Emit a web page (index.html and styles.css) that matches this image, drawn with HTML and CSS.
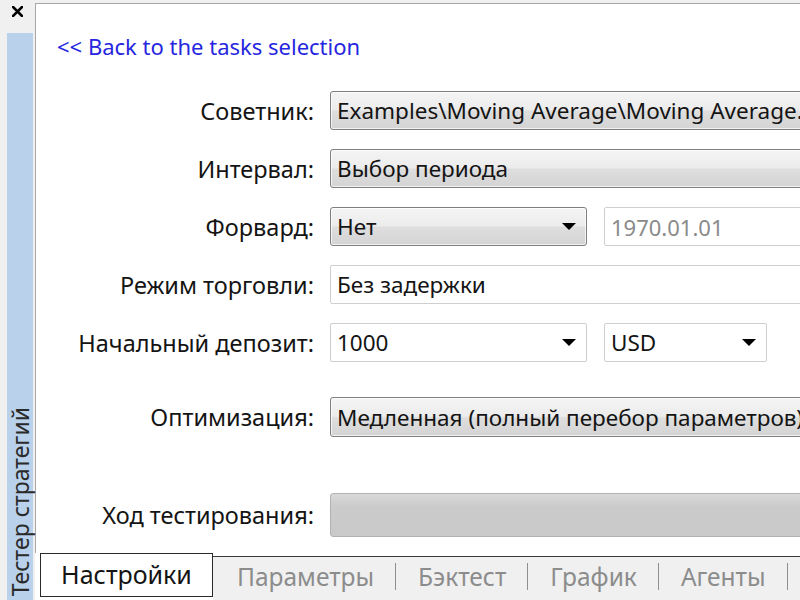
FILE: index.html
```html
<!DOCTYPE html>
<html lang="ru">
<head>
<meta charset="utf-8">
<title>Тестер стратегий</title>
<link rel="stylesheet" href="styles.css">
</head>
<body>
<div class="app">
  <aside class="side">
    <div class="close">
      <svg width="11" height="11" viewBox="0 0 11 11"><path d="M1 1 L10 10 M10 1 L1 10" stroke="#000" stroke-width="2.6" stroke-linecap="square"/></svg>
    </div>
    <div class="vtab"><span class="vtext">Тестер стратегий</span></div>
  </aside>
  <main class="panel">
    <div class="content">
      <div class="back-wrap"><a class="back" href="#">&lt;&lt; Back to the tasks selection</a></div>
      <div class="form">
        <div class="row">
          <div class="label">Советник:</div>
          <div class="ctrl btn wide">Examples\Moving Average\Moving Average.ex5</div>
        </div>
        <div class="row">
          <div class="label">Интервал:</div>
          <div class="ctrl btn wide">Выбор периода</div>
        </div>
        <div class="row">
          <div class="label">Форвард:</div>
          <div class="ctrl btn narrow"><span>Нет</span><i class="arrow"></i></div>
          <div class="ctrl field date">1970.01.01</div>
        </div>
        <div class="row">
          <div class="label">Режим торговли:</div>
          <div class="ctrl field wide">Без задержки</div>
        </div>
        <div class="row">
          <div class="label">Начальный депозит:</div>
          <div class="ctrl field narrow"><span>1000</span><i class="arrow"></i></div>
          <div class="ctrl field cur"><span>USD</span><i class="arrow"></i></div>
        </div>
        <div class="row row-opt">
          <div class="label">Оптимизация:</div>
          <div class="ctrl btn wide">Медленная (полный перебор параметров)</div>
        </div>
        <div class="row row-prog">
          <div class="label">Ход тестирования:</div>
          <div class="ctrl progress wide"></div>
        </div>
      </div>
    </div>
    <div class="tabs">
      <div class="tab-gap"></div>
      <div class="tab active">Настройки</div>
      <div class="tab-rest">
        <div class="tab">Параметры</div>
        <div class="tab">Бэктест</div>
        <div class="tab">График</div>
        <div class="tab">Агенты</div>
      </div>
    </div>
  </main>
</div>
</body>
</html>
```
FILE: styles.css
```css
* { box-sizing: border-box; }
html, body {
  margin: 0;
  height: 600px;
  overflow: hidden;
  background: #f0f0f0;
  font-family: "Noto Sans", "Open Sans", sans-serif;
  font-size: 23px;
  color: #141414;
}
.app {
  display: flex;
  height: 600px;
}
.side {
  width: 35px;
  flex-shrink: 0;
  display: flex;
  flex-direction: column;
  background: #f0f0f0;
}
.close {
  height: 33px;
  padding: 6px 0 0 12px;
}
.close svg { display: block; }
.vtab {
  flex: 1;
  margin-left: 7px;
  width: 26px;
  background: #b9d1ea;
  display: flex;
  flex-direction: column;
  justify-content: flex-end;
  align-items: center;
  padding-bottom: 4px;
}
.vtext {
  writing-mode: vertical-rl;
  transform: rotate(180deg);
  font-size: 23px;
  line-height: 26px;
  color: #2a2a2a;
  white-space: nowrap;
}
.panel {
  flex: 1;
  min-width: 0;
  margin-top: 3px;
  display: flex;
  flex-direction: column;
}
.content {
  flex: 1;
  min-height: 0;
  background: #fff;
  border-top: 1px solid #a8a8a8;
  border-left: 1px solid #a8a8a8;
  overflow: hidden;
  padding-top: 29px;
}
.back-wrap {
  padding-left: 21px;
  line-height: 26px;
  font-size: 22px;
}
.back {
  color: #2626e0;
  text-decoration: none;
}
.form {
  margin-top: 32px;
  display: flex;
  flex-direction: column;
  gap: 19px;
}
.row {
  display: flex;
  align-items: center;
  height: 39px;
}
.row-opt { margin-top: 16px; height: 40px; }
.row-prog { margin-top: 37px; height: 44px; }
.label {
  width: 278px;
  flex-shrink: 0;
  text-align: right;
  margin-right: 16px;
  white-space: nowrap;
  font-size: 23.5px;
}
.ctrl {
  height: 100%;
  flex-shrink: 0;
  display: flex;
  align-items: center;
  justify-content: space-between;
  padding: 0 10px 0 6px;
  white-space: nowrap;
  overflow: hidden;
  font-size: 22.5px;
}
.wide { width: 560px; }
.narrow { width: 257px; }
.date { width: 240px; margin-left: 17px; color: #8a8a8a; font-size: 22px; }
.cur { width: 163px; margin-left: 17px; }
.btn {
  border: 1px solid #7f7f7f;
  border-radius: 3px;
  background: linear-gradient(#f4f4f4 0%, #ececec 48%, #dedede 52%, #d4d4d4 100%);
  box-shadow: inset 0 0 0 1px rgba(255,255,255,0.7);
}
.field {
  border: 1px solid #cfcfcf;
  border-radius: 2px;
  background: #fff;
}
.progress {
  border: 1px solid #b2b2b2;
  border-radius: 3px;
  background: linear-gradient(#d9d9d9 0%, #cbcbcb 30%, #c9c9c9 100%);
}
.arrow {
  width: 0;
  height: 0;
  border-left: 7px solid transparent;
  border-right: 7px solid transparent;
  border-top: 7px solid #000;
}
.tabs {
  height: 47px;
  flex-shrink: 0;
  display: flex;
  background: #fff;
  font-size: 24.5px;
}
.tab-gap { width: 5px; flex-shrink: 0; }
.tab.active {
  width: 173px;
  flex-shrink: 0;
  height: 44px;
  border: 1px solid #2a2a2a;
  background: #fff;
  color: #141414;
  display: flex;
  align-items: center;
  justify-content: center;
  padding: 0 0 2px 0;
  font-size: 25px;
}
.tab-rest {
  flex: 1;
  min-width: 0;
  overflow: hidden;
  margin-top: 3px;
  border-top: 1px solid #3a3a3a;
  background: #f0f0f0;
  display: flex;
  align-items: center;
  padding-left: 24px;
  padding-bottom: 4px;
}
.tab-rest .tab {
  flex-shrink: 0;
  color: #8c8c8c;
  padding: 0 21px 0 22px;
  border-right: 1px solid #8f8f8f;
  line-height: 27px;
  white-space: nowrap;
}
.tab-rest .tab:first-child { padding-left: 0; }
```
